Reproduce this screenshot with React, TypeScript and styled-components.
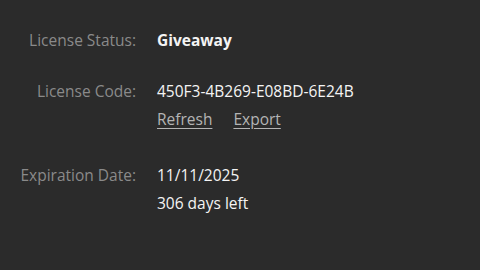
import React from 'react';
import styled, { createGlobalStyle } from 'styled-components';

const Global = createGlobalStyle`
  html, body {
    margin: 0;
    padding: 0;
    background: #2b2b2b;
  }
  body {
    font-family: "Open Sans", "DejaVu Sans", sans-serif;
  }
`;

const Page = styled.div`
  width: 480px;
  height: 270px;
  box-sizing: border-box;
  padding-top: 26px;
  background: #2b2b2b;
  display: flex;
  flex-direction: column;
`;

const Row = styled.div<{ $gap: number }>`
  display: grid;
  grid-template-columns: 136px 1fr;
  column-gap: 21px;
  margin-bottom: ${(p) => p.$gap}px;
`;

const Label = styled.div`
  text-align: right;
  color: #8a8a8a;
  font-size: 15.5px;
  line-height: 28px;
  white-space: nowrap;
`;

const Values = styled.div`
  display: flex;
  flex-direction: column;
`;

const Value = styled.div<{ $bold?: boolean }>`
  color: #f4f4f4;
  font-size: 15.5px;
  line-height: 28px;
  font-weight: ${(p) => (p.$bold ? 700 : 400)};
  white-space: nowrap;
`;

const Links = styled.div`
  display: flex;
  gap: 21px;
  line-height: 28px;
`;

const Link = styled.a`
  color: #b4b4b4;
  font-size: 15.5px;
  text-decoration: underline;
  text-underline-offset: 3px;
  cursor: pointer;
`;

const App: React.FC = () => {
  return (
    <Page>
      <Global />
      <Row $gap={23}>
        <Label>License Status:</Label>
        <Values>
          <Value $bold>Giveaway</Value>
        </Values>
      </Row>
      <Row $gap={28}>
        <Label>License Code:</Label>
        <Values>
          <Value>450F3-4B269-E08BD-6E24B</Value>
          <Links>
            <Link>Refresh</Link>
            <Link>Export</Link>
          </Links>
        </Values>
      </Row>
      <Row $gap={0}>
        <Label>Expiration Date:</Label>
        <Values>
          <Value>11/11/2025</Value>
          <Value>306 days left</Value>
        </Values>
      </Row>
    </Page>
  );
};

export default App;
